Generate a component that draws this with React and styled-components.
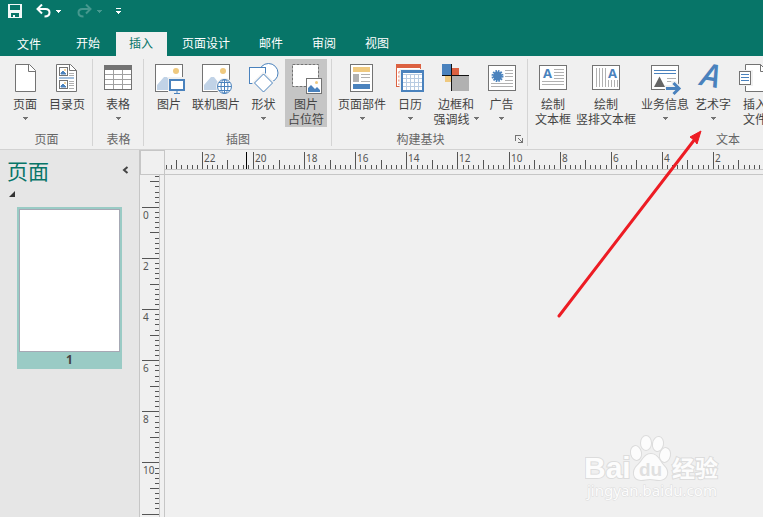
import React, { useLayoutEffect, useRef, useState } from "react";
import styled, { createGlobalStyle } from "styled-components";

const TEAL = "#077568";
const BLUE = "#4a82bd";
const GREY = "#737373";
const LINE = "#c6c6c6";
const ORANGE = "#dc6141";
const YELLOW = "#efc97f";
const SURFACE = "#f0f0f0";

const GlobalStyle = createGlobalStyle`
  * { box-sizing: border-box; }
  html, body, #root { height: 100%; }
  body {
    margin: 0;
    overflow: hidden;
    background: ${SURFACE};
    font-family: "Noto Sans CJK SC", "Noto Sans", sans-serif;
    font-size: 12px;
    line-height: 15px;
    color: #444;
  }
  button {
    margin: 0;
    padding: 0;
    border: 0;
    background: none;
    color: inherit;
    font: inherit;
  }
  svg { display: block; flex: none; }
`;

const Window = styled.div`
  position: relative;
  display: flex;
  flex-direction: column;
  height: 100%;
  min-height: 0;
  overflow: hidden;
`;

const Header = styled.header`
  flex: none;
  background: ${TEAL};
  color: #fff;
`;

const QuickAccess = styled.div`
  display: flex;
  align-items: center;
  height: 32px;
  padding: 0 7px 10px;
`;

const QuickButton = styled.button`
  margin-right: ${(p) => p.$gap || 0}px;
  opacity: ${(p) => (p.disabled ? 0.25 : 1)};
`;

const Tabs = styled.nav`
  display: flex;
  gap: 2px;
  height: 24px;
`;

const Tab = styled.button`
  flex: none;
  padding: 0 14px 4px 13px;
  color: ${(p) => (p.$active ? TEAL : "#fff")};
  background: ${(p) => (p.$active ? SURFACE : "transparent")};
`;

const FileTab = styled(Tab)`
  padding: 0 20px 2px 17px;
`;

const Ribbon = styled.div`
  flex: none;
  display: flex;
  height: 94px;
  overflow: hidden;
  padding-top: 3px;
  background: ${SURFACE};
  border-bottom: 1px solid #d2d2d2;
`;

const Group = styled.section`
  flex: none;
  display: flex;
  flex-direction: column;
  min-width: ${(p) => p.$min || 0}px;
  height: 87px;
  padding: 0 4px;
  border-right: 1px solid #d4d4d4;
`;

const Tools = styled.div`
  display: flex;
  height: 69px;
`;

const GroupFooter = styled.div`
  display: flex;
  align-items: center;
  padding-top: 4px;
  color: #666;
`;

const GroupName = styled.span`
  flex: 1;
  padding-left: ${(p) => (p.$inset ? 0 : 1)}px;
  padding-right: ${(p) => (p.$inset ? 10 : 0)}px;
  text-align: center;
`;

const Tool = styled.button`
  flex: none;
  display: flex;
  flex-direction: column;
  align-items: center;
  width: ${(p) => p.$width || 42}px;
  padding-top: 3px;
  white-space: nowrap;
  background: ${(p) => (p.$pressed ? "#c5c5c5" : "transparent")};
`;

const ToolLabel = styled.span`
  display: flex;
  align-items: center;
  gap: 4px;
  height: 15px;
`;

const Workspace = styled.main`
  flex: 1;
  display: flex;
  min-height: 0;
`;

const PagesPane = styled.aside`
  flex: none;
  width: 140px;
  padding: 6px 0 0 7px;
  background: #e6e6e6;
  border-right: 1px solid ${LINE};
`;

const PaneHeader = styled.div`
  display: flex;
  align-items: center;
  justify-content: space-between;
  height: 28px;
  padding-right: 10px;
`;

const PaneTitle = styled.h2`
  margin: 0;
  color: ${TEAL};
  font-size: 21px;
  font-weight: 400;
  line-height: 28px;
`;

const SectionToggle = styled.button`
  display: block;
  padding: 7px 2px 10px;
`;

const Thumbnail = styled.button`
  display: flex;
  flex-direction: column;
  width: 105px;
  margin-left: 10px;
  padding: 2px 2px 0;
  background: #9acbc5;
`;

const Sheet = styled.span`
  width: 100%;
  height: 143px;
  background: #fff;
  border: 1px solid #a6a8b4;
`;

const PageNumber = styled.span`
  align-self: center;
  height: 17px;
  font-family: "Noto Sans", sans-serif;
  font-weight: 700;
  line-height: 15px;
`;

const Canvas = styled.div`
  flex: 1;
  display: grid;
  grid-template-columns: 25px 1fr;
  grid-template-rows: 25px 1fr;
  min-width: 0;
  min-height: 0;
`;

const Corner = styled.div`
  border: 1px solid ${LINE};
`;

const TopRuler = styled.div`
  min-width: 0;
  overflow: hidden;
  border-bottom: 1px solid ${LINE};
`;

const SideRuler = styled.div`
  min-height: 0;
  overflow: hidden;
  border-right: 1px solid ${LINE};
`;

const Page = styled.div`
  background: ${SURFACE};
`;

const Watermark = styled.div`
  position: absolute;
  right: 38px;
  bottom: 12px;
`;

const Pointer = styled.div`
  position: absolute;
  left: 550px;
  top: 125px;
  pointer-events: none;
`;

const Caret = ({ color = "currentColor" }) => (
  <svg width="5" height="3" viewBox="0 0 5 3" shapeRendering="crispEdges">
    <path d="M0 0H5V1H4V2H3V3H2V2H1V1H0Z" fill={color} />
  </svg>
);

const Icon = ({ children }) => (
  <svg width="34" height="34" viewBox="0 0 34 34" fill="none" stroke={GREY}>
    {children}
  </svg>
);

const BlankPageIcon = () => (
  <Icon>
    <path d="M7.5 2.5H21.5L27.5 8.5V29.5H7.5Z" fill="#fff" />
    <path d="M20.5 2.5V9.5H27.5" />
  </Icon>
);

const MiniPicture = ({ y }) => (
  <>
    <rect x="9.5" y={y + 0.5} width="8" height="8" fill="#fff" />
    <path d={`M11 ${y + 7}V${y + 6}L13 ${y + 4}L16 ${y + 7}Z`} fill={BLUE} stroke={BLUE} />
    <circle cx="15" cy={y + 3} r="1" fill={YELLOW} stroke="none" />
  </>
);

const ContentsIcon = () => (
  <Icon>
    <path d="M6.5 2.5H20.5L26.5 8.5V29.5H6.5Z" fill="#fff" />
    <path d="M19.5 2.5V8.5H26.5" />
    <MiniPicture y={5} />
    <MiniPicture y={18} />
    <path d="M9 16H24" stroke={BLUE} />
    <path d="M19 11.5H24M19 13.5H24M19 19.5H24M19 21.5H24M19 23.5H24M19 26.5H24" stroke="#b0b0b0" />
  </Icon>
);

const TableIcon = () => (
  <Icon>
    <rect x="3.5" y="3.5" width="27" height="24" fill="#fff" />
    <rect x="3" y="3" width="28" height="5" fill={GREY} stroke="none" />
    <path d="M12.5 8V27M21.5 8V27M4 12.5H30M4 17.5H30M4 22.5H30" stroke="#a0a0a0" />
    <path d="M3.5 8V27.5H30.5V8" />
  </Icon>
);

const PictureFrame = () => (
  <>
    <rect x="3.5" y="2.5" width="27" height="27" fill="#fff" />
    <path d="M5 28V23L12 15L15 15L25 28Z" fill="#c1d3e7" stroke="none" />
    <circle cx="24" cy="9" r="3" fill={YELLOW} stroke="none" />
  </>
);

const PictureIcon = () => (
  <Icon>
    <PictureFrame />
    <rect x="16" y="15" width="18" height="19" fill={SURFACE} stroke="none" />
    <rect x="18" y="18" width="14" height="10" fill="#fff" stroke={BLUE} strokeWidth="2" />
    <path d="M25 29V31M22 31.5H28" stroke={BLUE} />
  </Icon>
);

const OnlinePictureIcon = () => (
  <Icon>
    <PictureFrame />
    <circle cx="25.5" cy="24.5" r="8.5" fill={SURFACE} stroke="none" />
    <g stroke={BLUE}>
      <circle cx="25.5" cy="24.5" r="7" fill="#fff" />
      <ellipse cx="25.5" cy="24.5" rx="3.5" ry="7" />
      <path d="M25.5 17.5V31.5M18.5 24.5H32.5M20 20.5H31M20 28.5H31" />
    </g>
  </Icon>
);

const ShapesIcon = () => (
  <Icon>
    <g stroke={BLUE} fill="#fff">
      <circle cx="21.5" cy="11" r="9.5" />
      <rect x="2.5" y="5.5" width="16" height="16" />
      <path d="M16.5 11.5L26 21L16.5 30.5L7 21Z" stroke={SURFACE} strokeWidth="3" />
      <path d="M16.5 12L25.5 21L16.5 30L7.5 21Z" />
    </g>
  </Icon>
);

const PlaceholderIcon = () => (
  <Icon>
    <rect x="3.5" y="2.5" width="26" height="22" fill="#fff" strokeDasharray="3 1" />
    <rect x="17.5" y="16.5" width="15" height="15" fill="#fff" />
    <path d="M19 30V26L22 23L26 27L28 25L31 28V30Z" fill={BLUE} stroke="none" />
    <circle cx="27.5" cy="20.5" r="1.5" fill={YELLOW} stroke="none" />
  </Icon>
);

const PagePartsIcon = () => (
  <Icon>
    <rect x="5.5" y="2.5" width="22" height="27" fill="#fff" />
    <g stroke="none">
      <rect x="8" y="5" width="17" height="5" fill={YELLOW} />
      <rect x="8" y="12" width="6" height="8" fill="#b1b1b1" />
      <rect x="8" y="22" width="17" height="5" fill={BLUE} />
    </g>
    <path d="M16 12.5H25M16 15.5H25M16 19.5H25" stroke="#b1b1b1" />
  </Icon>
);

const CalendarIcon = () => (
  <Icon>
    <rect x="3.5" y="2.5" width="24" height="22" fill="#fff" stroke={ORANGE} />
    <path d="M3 4H28" stroke={ORANGE} strokeWidth="4" />
    <path d="M6 9.5V23M6 9.5H26" stroke={ORANGE} strokeDasharray="2 2" />
    <rect x="6.5" y="7" width="26" height="24" fill={SURFACE} stroke="none" />
    <rect x="9" y="9" width="21" height="20" fill="#fff" stroke={BLUE} strokeWidth="2" />
    <path d="M8 9.5H31" stroke={BLUE} strokeWidth="3" />
    <path d="M13.5 13V28M17.5 13V28M21.5 13V28M25.5 13V28M10 12.5H29M10 16.5H29M10 20.5H29M10 24.5H29" stroke="#b9cce2" />
  </Icon>
);

const BordersIcon = () => (
  <Icon>
    <g stroke="none">
      <rect x="3" y="2" width="9" height="11" fill={BLUE} />
      <rect x="13" y="6" width="7" height="7" fill={ORANGE} />
      <rect x="6" y="14" width="6" height="6" fill={YELLOW} />
      <rect x="13" y="14" width="17" height="15" fill="#b1b1b1" />
    </g>
    <path d="M3 13.5H30M12.5 2V29" stroke="#111" />
  </Icon>
);

const AdvertIcon = () => (
  <Icon>
    <rect x="3.5" y="3.5" width="27" height="25" fill="#fff" />
    <circle cx="12.5" cy="14" r="4.5" fill={BLUE} stroke="none" />
    <circle cx="12.5" cy="14" r="5" stroke={BLUE} strokeWidth="2" strokeDasharray="1.6 1" />
    <path d="M20 8.5H28M20 11.5H28M20 14.5H28M20 18.5H28M6 21.5H28M6 24.5H28" stroke="#b1b1b1" />
  </Icon>
);

const Letter = (props) => (
  <text
    fill={BLUE}
    stroke="none"
    fontFamily="Open Sans, Noto Sans, sans-serif"
    fontWeight="700"
    fontSize="13"
    {...props}
  >
    A
  </text>
);

const TextBoxIcon = () => (
  <Icon>
    <rect x="3.5" y="3.5" width="27" height="24" fill="#fff" />
    <Letter x="7" y="16" />
    <path d="M18 7.5H28M18 10.5H28M18 13.5H28M18 16.5H28M6 19.5H28M6 22.5H28" stroke="#b1b1b1" />
  </Icon>
);

const VerticalTextBoxIcon = () => (
  <Icon>
    <rect x="3.5" y="3.5" width="27" height="24" fill="#fff" />
    <Letter x="19" y="16" />
    <path
      d="M7.5 6V25M10.5 6V25M13.5 6V25M16.5 6V25M19.5 18V25M22.5 18V25M25.5 18V25M28.5 18V25"
      stroke="#b1b1b1"
    />
  </Icon>
);

const BusinessInfoIcon = () => (
  <Icon>
    <rect x="3.5" y="3.5" width="27" height="24" fill="#fff" />
    <path d="M6 8.5H28M6 11.5H28" stroke={BLUE} />
    <path d="M6 25L11.5 14.5L17 25Z" fill="#666" stroke="none" />
    <path d="M19 16.5H28M19 19.5H28" stroke="#b1b1b1" />
    <path d="M17 23H24L23 19H28L34 26L28 33H22L24 29H17Z" fill={SURFACE} stroke="none" />
    <path d="M18 26.5H31" stroke={BLUE} strokeWidth="3" />
    <path d="M25.5 21L31 26.5L25.5 32" stroke={BLUE} strokeWidth="3" />
  </Icon>
);

const WordArtIcon = () => (
  <Icon>
    <Letter
      x="5"
      y="25"
      fontSize="32"
      fontWeight="600"
      fontStyle="italic"
      transform="rotate(10 16 16)"
    />
  </Icon>
);

const InsertFileIcon = () => (
  <Icon>
    <path d="M7.5 2.5H22.5L29.5 9.5V29.5H7.5Z" fill="#fff" />
    <path d="M22.5 2.5V9.5H29.5" />
    <rect x="0" y="8" width="15" height="16" fill={SURFACE} stroke="none" />
    <rect x="1.5" y="9.5" width="11" height="13" fill="#fff" />
    <path d="M3 12.5H11M3 15.5H11M3 18.5H11" stroke={BLUE} />
  </Icon>
);

const SaveIcon = () => (
  <svg width="15" height="14" viewBox="0 0 15 14" shapeRendering="crispEdges">
    <path
      fill="#f2f8f7"
      fillRule="evenodd"
      d="M1 0H15V14H1ZM3 1V6H13V1ZM4 9V13H6V11H8V13H12V9Z"
    />
  </svg>
);

const UndoIcon = ({ flip }) => (
  <svg width="15" height="14" viewBox="0 0 15 14" fill="none" stroke="#fff" strokeWidth="2">
    <g transform={flip ? "translate(15 0) scale(-1 1)" : undefined}>
      <path d="M1.5 5H9.5C12 5 13.5 6.5 13.5 8.5C13.5 11 12 12.5 8.5 12.5" />
      <path d="M6 0.5L1.5 5L6 9.5" />
    </g>
  </svg>
);

const CustomizeIcon = () => (
  <svg width="5" height="6" viewBox="0 0 5 6" shapeRendering="crispEdges" fill="#fff">
    <path d="M0 0H5V1H0ZM0 3H5V4H4V5H3V6H2V5H1V4H0Z" />
  </svg>
);

const LauncherIcon = () => (
  <svg width="8" height="8" viewBox="0 0 8 8" fill="none" stroke={GREY} shapeRendering="crispEdges">
    <path d="M0.5 6V0.5H6M3 3L7 7M7.5 3V7.5H3" />
  </svg>
);

const groups = [
  {
    name: "页面",
    tools: [
      { icon: BlankPageIcon, lines: ["页面"], menu: true },
      { icon: ContentsIcon, lines: ["目录页"] },
    ],
  },
  { name: "表格", tools: [{ icon: TableIcon, lines: ["表格"], menu: true }] },
  {
    name: "插图",
    tools: [
      { icon: PictureIcon, lines: ["图片"] },
      { icon: OnlinePictureIcon, lines: ["联机图片"], width: 52 },
      { icon: ShapesIcon, lines: ["形状"], menu: true, width: 43 },
      { icon: PlaceholderIcon, lines: ["图片", "占位符"], pressed: true },
    ],
  },
  {
    name: "构建基块",
    launcher: true,
    tools: [
      { icon: PagePartsIcon, lines: ["页面部件"], menu: true, width: 52 },
      { icon: CalendarIcon, lines: ["日历"], menu: true, width: 44 },
      { icon: BordersIcon, lines: ["边框和", "强调线"], menu: true, width: 48 },
      { icon: AdvertIcon, lines: ["广告"], menu: true, width: 43 },
    ],
  },
  {
    name: "文本",
    min: 400,
    tools: [
      { icon: TextBoxIcon, lines: ["绘制", "文本框"] },
      { icon: VerticalTextBoxIcon, lines: ["绘制", "竖排文本框"], width: 64 },
      { icon: BusinessInfoIcon, lines: ["业务信息"], menu: true, width: 54 },
      { icon: WordArtIcon, lines: ["艺术字"], menu: true },
      { icon: InsertFileIcon, lines: ["插入", "文件"] },
    ],
  },
];

function ToolButton({ icon: Glyph, lines, menu, width, pressed }) {
  return (
    <Tool $width={width} $pressed={pressed} aria-pressed={pressed}>
      <Glyph />
      <ToolLabel>{lines[0]}</ToolLabel>
      <ToolLabel>
        {lines[1]}
        {menu && <Caret color={GREY} />}
      </ToolLabel>
    </Tool>
  );
}

// Two units on the ruler cover 51.1 pixels, split into ten small steps.
const STEP = 5.11;
const ticks = (from, to, origin) => {
  const list = [];
  for (let i = Math.ceil((from - origin) / STEP); origin + i * STEP < to; i += 1) {
    list.push({ i, at: Math.floor(origin + i * STEP) });
  }
  return list;
};
const tickLength = (i) => (i % 10 === 0 ? 17 : i % 5 === 0 ? 9 : 4);
const rulerFont = { fontFamily: "Noto Sans, sans-serif", fontSize: 10, fill: "#555" };

function useSize() {
  const ref = useRef(null);
  const [size, setSize] = useState({ width: 0, height: 0 });
  useLayoutEffect(() => {
    const measure = () =>
      setSize({ width: ref.current.clientWidth, height: ref.current.clientHeight });
    measure();
    window.addEventListener("resize", measure);
    return () => window.removeEventListener("resize", measure);
  }, []);
  return [ref, size];
}

function HorizontalRuler() {
  const [ref, { width }] = useSize();
  const marks = ticks(1, width, 37.4);
  return (
    <TopRuler ref={ref}>
      <svg width="100%" height="24" shapeRendering="crispEdges">
        {marks.map(({ i, at }) => (
          <rect key={i} x={at} y={19 - tickLength(i)} width="1" height={tickLength(i)} fill="#555" />
        ))}
        <rect x="81" y="2" width="1" height="17" fill="#000" />
        <rect y="19" width="100%" height="1" fill={LINE} />
        {marks
          .filter(({ i, at }) => i % 10 === 0 && at + 16 < width)
          .map(({ i, at }) => (
            <text key={i} x={at + 2} y="12" {...rulerFont}>
              {Math.abs(22 - i / 5)}
            </text>
          ))}
      </svg>
    </TopRuler>
  );
}

function VerticalRuler() {
  const [ref, { height }] = useSize();
  const marks = ticks(0, height, 32.4);
  return (
    <SideRuler ref={ref}>
      <svg width="24" height="100%" shapeRendering="crispEdges">
        {marks.map(({ i, at }) => (
          <rect key={i} x={19 - tickLength(i)} y={at} width={tickLength(i)} height="1" fill="#555" />
        ))}
        <rect x="19" width="1" height="100%" fill={LINE} />
        {marks
          .filter(({ i, at }) => i % 10 === 0 && at + 16 < height)
          .map(({ i, at }) => (
            <text key={i} x="3" y={at + 12} {...rulerFont}>
              {Math.abs(i / 5)}
            </text>
          ))}
      </svg>
    </SideRuler>
  );
}

function BaiduMark() {
  return (
    <svg
      width="140"
      height="72"
      viewBox="0 0 140 72"
      fill="#fcfcfc"
      stroke="#dcdcdc"
      strokeWidth="2"
      paintOrder="stroke"
      role="img"
      aria-label="Baidu 经验"
    >
      <text x="-1" y="45" fontFamily="Liberation Sans, sans-serif" fontWeight="700" fontSize="30">
        Bai
      </text>
      <ellipse cx="51" cy="20" rx="5" ry="7" transform="rotate(-12 51 20)" />
      <ellipse cx="61" cy="10" rx="5" ry="7" />
      <ellipse cx="73" cy="11" rx="5" ry="7" transform="rotate(10 73 11)" />
      <ellipse cx="80" cy="22" rx="5" ry="7" transform="rotate(12 80 22)" />
      <path d="M66 21C73 21 75 29 79 33C85 39 82 47 74 47C70 47 69 46 65 46C61 46 60 47 56 47C48 47 47 38 52 33C57 29 59 21 66 21Z" />
      <text
        x="54"
        y="43"
        fontFamily="Liberation Sans, sans-serif"
        fontWeight="700"
        fontSize="19"
        fill="#e0e0e0"
        stroke="none"
      >
        du
      </text>
      <text x="87" y="44" fontFamily="Noto Sans CJK SC, sans-serif" fontWeight="700" fontSize="23">
        经验
      </text>
      <text x="2" y="63" fontFamily="Noto Sans, sans-serif" fontSize="15" strokeWidth="1">
        jingyan.baidu.com
      </text>
    </svg>
  );
}

export default function App() {
  return (
    <Window>
      <GlobalStyle />
      <Header>
        <QuickAccess>
          <QuickButton aria-label="保存" $gap={14}>
            <SaveIcon />
          </QuickButton>
          <QuickButton aria-label="撤消" $gap={5}>
            <UndoIcon />
          </QuickButton>
          <QuickButton aria-label="撤消列表" $gap={16}>
            <Caret />
          </QuickButton>
          <QuickButton aria-label="恢复" disabled $gap={5}>
            <UndoIcon flip />
          </QuickButton>
          <QuickButton aria-label="恢复列表" disabled $gap={14}>
            <Caret />
          </QuickButton>
          <QuickButton aria-label="自定义快速访问工具栏">
            <CustomizeIcon />
          </QuickButton>
        </QuickAccess>
        <Tabs>
          <FileTab>文件</FileTab>
          {["开始", "插入", "页面设计", "邮件", "审阅", "视图"].map((name) => (
            <Tab key={name} $active={name === "插入"}>
              {name}
            </Tab>
          ))}
        </Tabs>
      </Header>
      <Ribbon>
        {groups.map((group) => (
          <Group key={group.name} $min={group.min}>
            <Tools>
              {group.tools.map((tool) => (
                <ToolButton key={tool.lines.join("")} {...tool} />
              ))}
            </Tools>
            <GroupFooter>
              <GroupName $inset={group.launcher}>{group.name}</GroupName>
              {group.launcher && (
                <button aria-label="构建基块库">
                  <LauncherIcon />
                </button>
              )}
            </GroupFooter>
          </Group>
        ))}
      </Ribbon>
      <Workspace>
        <PagesPane>
          <PaneHeader>
            <PaneTitle>页面</PaneTitle>
            <button aria-label="折叠">
              <svg width="7" height="8" viewBox="0 0 7 8" fill="none" stroke="#444" strokeWidth="2">
                <path d="M5.5 1L2 4L5.5 7" />
              </svg>
            </button>
          </PaneHeader>
          <SectionToggle aria-label="展开页面">
            <svg width="6" height="6" viewBox="0 0 6 6">
              <path d="M6 0V6H0Z" fill="#333" />
            </svg>
          </SectionToggle>
          <Thumbnail>
            <Sheet />
            <PageNumber>1</PageNumber>
          </Thumbnail>
        </PagesPane>
        <Canvas>
          <Corner />
          <HorizontalRuler />
          <VerticalRuler />
          <Page />
        </Canvas>
      </Workspace>
      <Watermark>
        <BaiduMark />
      </Watermark>
      <Pointer>
        <svg width="160" height="200" viewBox="0 0 160 200">
          <path d="M9 191L145 14" stroke="#ed1c24" strokeWidth="3" strokeLinecap="round" />
          <path d="M151 6L147 19L144 15L140 12Z" fill="#ed1c24" stroke="#ed1c24" />
        </svg>
      </Pointer>
    </Window>
  );
}
